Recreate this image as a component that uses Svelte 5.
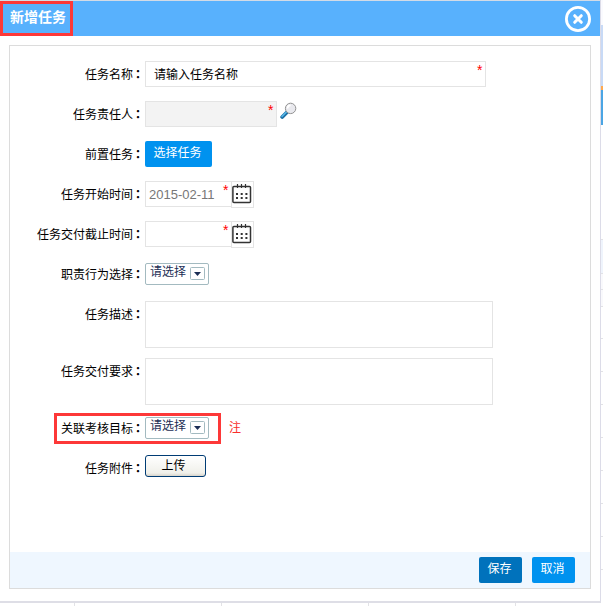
<script>
  const ticks = [74, 221, 368, 515];
  const lines = [239, 273, 289, 306, 338, 371, 404, 437, 470, 503, 536, 569];

  let name = $state("请输入任务名称");
  let owner = $state("");
  let startDate = $state("2015-02-11");
  let endDate = $state("");
  let description = $state("");
  let requirement = $state("");
</script>

{#snippet label(text)}
  <span class="label">{text}<b>：</b></span>
{/snippet}

{#snippet calendar()}
  <button class="calendar" aria-label="calendar">
    <svg width="20" height="22" viewBox="0 0 20 22">
      <rect x="0.9" y="4.4" width="17.6" height="16" rx="1" fill="#fff" stroke="#333" stroke-width="1.5" />
      <path d="M5.5 2v4M9.5 2v4M13.5 2v4" stroke="#333" stroke-width="1.2" />
      <path
        d="M4 12h2M8.7 12h2M13.4 12h2M4 16h2M8.7 16h2M13.4 16h2"
        stroke="#333"
        stroke-width="2"
      />
    </svg>
  </button>
{/snippet}

{#snippet dropdown()}
  <button class="select">
    <span>请选择</span>
    <svg width="15" height="13" viewBox="0 0 15 13">
      <rect x="0.5" y="0.5" width="14" height="12" rx="1" fill="#fff" stroke="#a3bac0" />
      <path d="M4 5h7L7.5 9z" fill="#1c2e55" />
    </svg>
  </button>
{/snippet}

<div class="page">
  <div class="dialog">
    <div class="header">
      <h1>新增任务</h1>
      <button class="close" aria-label="close">
        <svg width="26" height="26" viewBox="0 0 26 26">
          <circle cx="13" cy="13" r="11.6" fill="none" stroke="#fff" stroke-width="2.8" />
          <path d="M9.7 9.7l6.6 6.6M16.3 9.7l-6.6 6.6" stroke="#fff" stroke-width="3" stroke-linecap="round" />
        </svg>
      </button>
    </div>

    <div class="panel">
      <div class="form">
        <div class="row">
          {@render label("任务名称")}
          <div class="field name">
            <input bind:value={name} />
            <i>*</i>
          </div>
        </div>
        <div class="row">
          {@render label("任务责任人")}
          <div class="field owner">
            <input bind:value={owner} readonly />
            <i>*</i>
          </div>
          <svg class="search" width="17" height="18" viewBox="0 0 17 18">
            <path d="M2.2 15l5-5" stroke="#1c6ea4" stroke-width="3.8" stroke-linecap="round" />
            <path d="M2 14.4l5-5" stroke="#55b4e6" stroke-width="1.5" stroke-linecap="round" />
            <circle cx="10.6" cy="6.4" r="5.2" fill="#e9e9ee" stroke="#929292" />
            <path d="M7.6 6.4a3 3 0 0 1 3-3" stroke="#fff" stroke-width="1.6" fill="none" />
          </svg>
        </div>
        <div class="row">
          {@render label("前置任务")}
          <button class="btn pick">选择任务</button>
        </div>
        <div class="row">
          {@render label("任务开始时间")}
          <div class="field date">
            <input bind:value={startDate} />
            <i>*</i>
          </div>
          {@render calendar()}
        </div>
        <div class="row">
          {@render label("任务交付截止时间")}
          <div class="field date">
            <input bind:value={endDate} />
            <i>*</i>
          </div>
          {@render calendar()}
        </div>
        <div class="row">
          {@render label("职责行为选择")}
          {@render dropdown()}
        </div>
        <div class="row tall">
          {@render label("任务描述")}
          <textarea bind:value={description}></textarea>
        </div>
        <div class="row tall">
          {@render label("任务交付要求")}
          <textarea bind:value={requirement}></textarea>
        </div>
        <div class="row marked">
          {@render label("关联考核目标")}
          {@render dropdown()}
          <span class="note">注</span>
        </div>
        <div class="row">
          {@render label("任务附件")}
          <button class="upload">上传</button>
        </div>
      </div>

      <div class="footer">
        <button class="btn save">保存</button>
        <button class="btn">取消</button>
      </div>
    </div>
  </div>

  <!-- edge of the page behind the dialog -->
  <div class="side">
    <div class="side-top"></div>
    <div class="side-nav"></div>
    <div class="side-tab"></div>
    <div class="side-head"></div>
    <div class="side-sub"></div>
  </div>
  {#each lines as y}
    <div class="line" style="top: {y}px"></div>
  {/each}
  {#each ticks as x}
    <div class="tick" style="left: {x}px"></div>
  {/each}
</div>

<style>
  :global(body) {
    background: #fff;
    overflow: hidden;
  }

  .page {
    position: relative;
    display: flex;
    width: 603px;
    height: 606px;
    overflow: hidden;
    font: 12px/16px "Liberation Sans", "Noto Sans CJK SC", sans-serif;
    color: #000;
  }

  .page * {
    box-sizing: border-box;
  }

  button,
  input,
  textarea {
    margin: 0;
    padding: 0;
    border: 0;
    font-family: "Liberation Sans", "Noto Sans CJK SC", sans-serif;
    font-size: 12px;
    line-height: 16px;
  }

  .dialog {
    width: 601px;
    height: 603px;
    border-top: 1px solid #d3dbe6;
    border-right: 1px solid #dcdce8;
    border-bottom: 2px solid #dedee6;
    background: #fff;
  }

  .header {
    display: flex;
    justify-content: space-between;
    height: 35px;
    background: #58b1fd;
  }

  h1 {
    width: 73px;
    height: 35px;
    margin: 0;
    padding-left: 7px;
    border: 3px solid #fd3838;
    color: #fff;
    font: bold 14px/25px "Noto Sans CJK SC", sans-serif;
    white-space: nowrap;
  }

  .close {
    width: 26px;
    height: 26px;
    margin: 5px 9px 0 0;
    background: none;
  }

  .close svg,
  .calendar svg {
    display: block;
  }

  .panel {
    display: flex;
    flex-direction: column;
    width: 582px;
    height: 544px;
    margin: 9px 0 0 9px;
    border: 1px solid #dcdcdc;
  }

  .form {
    flex: 1;
    padding-top: 9px;
  }

  .row {
    display: flex;
    align-items: flex-start;
    height: 40px;
    padding-top: 6px;
  }

  .row.tall {
    height: 57px;
  }

  .label {
    display: flex;
    justify-content: flex-end;
    width: 135px;
    padding-top: 5px;
    font-family: "Noto Sans CJK SC", sans-serif;
    white-space: nowrap;
  }

  .label b {
    width: 12px;
    margin-right: 1px;
    margin-left: -1px;
    font-family: "Noto Sans CJK TC", sans-serif;
  }

  .field {
    display: flex;
    height: 26px;
    border: 1px solid #e4e4e4;
  }

  .field input {
    flex: 1;
    min-width: 0;
    padding-top: 1px;
    background: none;
    outline: none;
  }

  .field i {
    width: 8px;
    color: #f00;
    font: 14px/16px "Liberation Sans", sans-serif;
  }

  .name {
    width: 341px;
  }

  .name input {
    padding-left: 8px;
  }

  .owner {
    width: 132px;
    background: #f3f3f3;
  }

  .search {
    margin: 1px 0 0 3px;
  }

  .date {
    width: 86px;
    border-right: 0;
  }

  .date input {
    padding-left: 3px;
    color: #777;
    font-size: 13px;
  }

  .calendar {
    width: 23px;
    height: 27px;
    border: 1px solid #e4e4e4;
    background: #fff;
  }

  .calendar svg {
    margin-top: -3px;
  }

  .btn {
    width: 43px;
    height: 26px;
    padding: 0 2px 3px 0;
    border-radius: 2px;
    background: #0092ef;
    color: #fff;
  }

  .pick {
    width: 67px;
  }

  .select {
    display: flex;
    width: 64px;
    height: 22px;
    margin-top: 2px;
    padding-left: 4px;
    border: 1px solid #a3bac0;
    border-radius: 2px;
    background: #fff;
    color: #1c2e55;
  }

  .select svg {
    margin: 3px 0 0 4px;
  }

  textarea {
    width: 348px;
    height: 47px;
    border: 1px solid #e4e4e4;
    resize: none;
  }

  .marked {
    position: relative;
  }

  .marked::before {
    content: "";
    position: absolute;
    top: 4px;
    left: 44px;
    box-sizing: border-box;
    width: 167px;
    height: 31px;
    border: 3px solid #fd3838;
  }

  .note {
    padding: 4px 0 0 20px;
    color: #f8302c;
    font-family: "Noto Sans CJK SC", sans-serif;
  }

  .upload {
    width: 61px;
    height: 22px;
    padding-right: 4px;
    border: 1px solid #003c74;
    border-radius: 3px;
    background: linear-gradient(#fff, #f0f0ea 85%, #d8d4cb);
    color: #000;
  }

  .footer {
    display: flex;
    justify-content: flex-end;
    gap: 10px;
    height: 36px;
    padding: 5px 15px 0 0;
    background: #eff7ff;
  }

  .save {
    background: #0072bc;
  }

  .side {
    width: 2px;
  }

  .side-top {
    height: 25px;
    background: #fafafe;
  }

  .side-nav {
    height: 61px;
    background: #c8daf6;
  }

  .side-tab {
    height: 39px;
    border-top: 4px solid #ffa94d;
    background: #4ba5e4;
  }

  .side-head {
    height: 34px;
    margin-top: 114px;
    background: #eff4fc;
  }

  .side-sub {
    height: 33px;
    background: #f9f9fc;
  }

  .line,
  .tick {
    position: absolute;
    background: #e2e2e6;
  }

  .line {
    right: 0;
    width: 2px;
    height: 1px;
  }

  .tick {
    top: 603px;
    width: 1px;
    height: 3px;
  }
</style>
